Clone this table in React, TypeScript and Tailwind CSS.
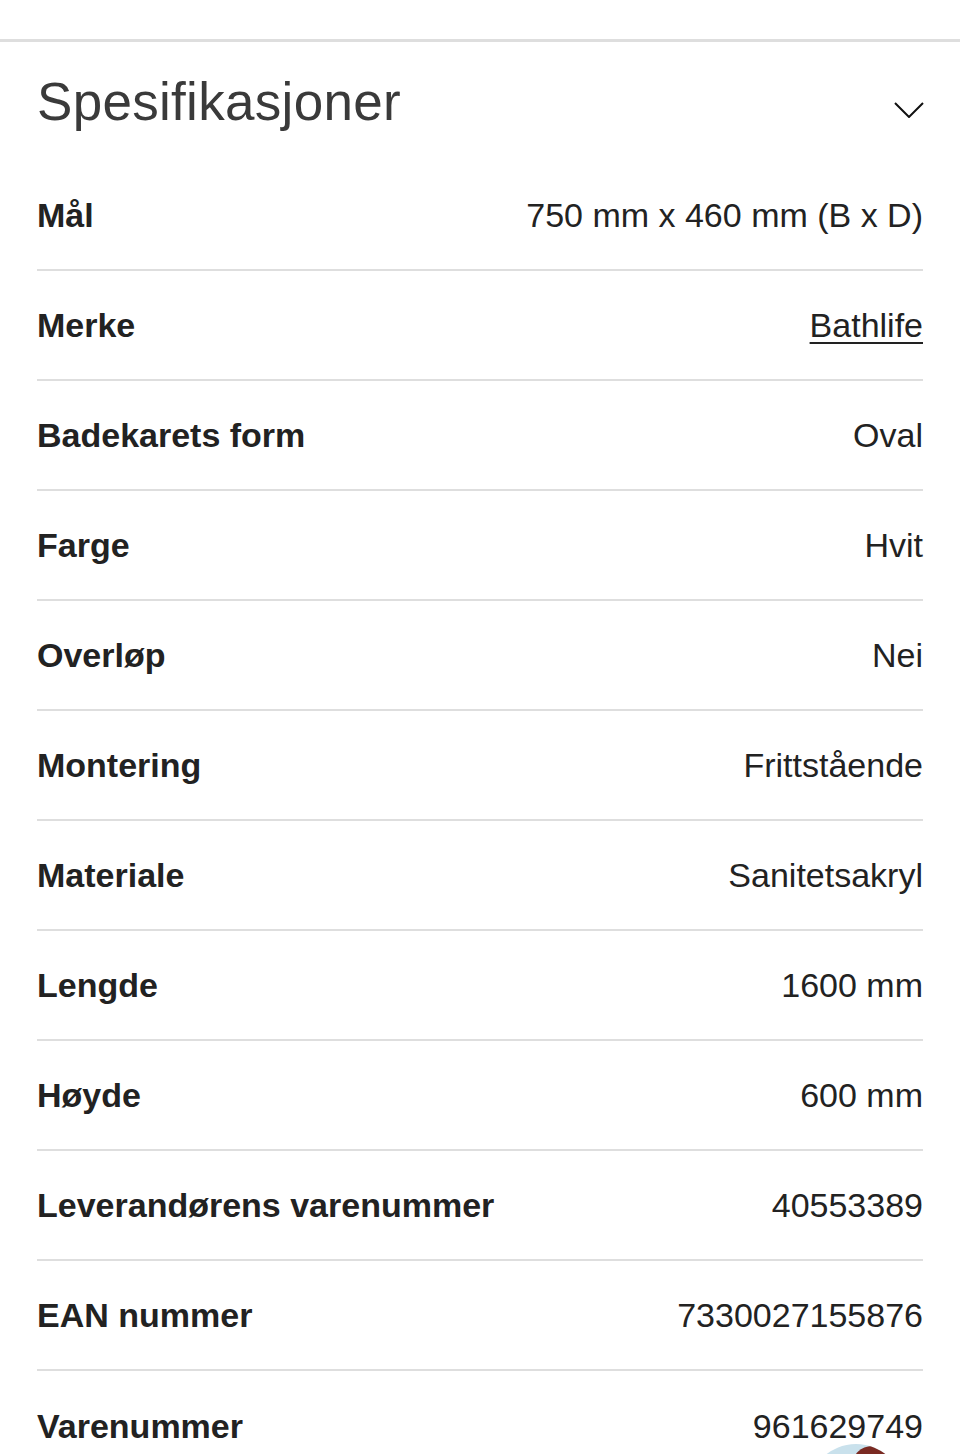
const specs: { label: string; value: string; link?: boolean }[] = [
  { label: 'Mål', value: '750 mm x 460 mm (B x D)' },
  { label: 'Merke', value: 'Bathlife', link: true },
  { label: 'Badekarets form', value: 'Oval' },
  { label: 'Farge', value: 'Hvit' },
  { label: 'Overløp', value: 'Nei' },
  { label: 'Montering', value: 'Frittstående' },
  { label: 'Materiale', value: 'Sanitetsakryl' },
  { label: 'Lengde', value: '1600 mm' },
  { label: 'Høyde', value: '600 mm' },
  { label: 'Leverandørens varenummer', value: '40553389' },
  { label: 'EAN nummer', value: '7330027155876' },
  { label: 'Varenummer', value: '961629749' }
];

export default function App() {
  return (
    <div className="relative h-[1454px] overflow-hidden bg-white font-['Liberation_Sans',Arial,sans-serif] text-[#222]">
      <div className="h-[39px]" />
      <div className="border-t-[3px] border-[#dedede]" />

      <section className="px-[37px]">
        <header className="flex h-[119px] items-center justify-between">
          <h2 className="text-[53px] leading-none tracking-[0.3px] text-[#3a3a3a]">Spesifikasjoner</h2>
          <svg viewBox="0 0 30 16" className="mr-[-1px] mt-[16px] h-[16px] w-[30px]" fill="none" stroke="#111" strokeWidth="2">
            <path d="M1 1 15 15 29 1" />
          </svg>
        </header>

        <dl>
          {specs.map((spec, index) => (
            <div
              key={spec.label}
              className={`flex h-[110px] items-center justify-between ${
                index < specs.length - 1 ? 'border-b-2 border-[#dedede]' : ''
              }`}
            >
              <dt className="text-[34px] font-bold leading-[40px] text-[#222]">{spec.label}</dt>
              <dd className={`text-[34px] leading-[40px] text-[#222] ${spec.link ? 'underline decoration-2 underline-offset-[5px]' : ''}`}>
                {spec.value}
              </dd>
            </div>
          ))}
        </dl>
      </section>

      <div className="absolute left-[808px] top-[1444px] h-[96px] w-[96px] overflow-hidden rounded-full bg-[#c9e1ec]">
        <div className="ml-[44px] mt-[2px] h-[30px] w-[40px] rounded-tl-[20px] bg-[#7a2a22]" />
      </div>
    </div>
  );
}
